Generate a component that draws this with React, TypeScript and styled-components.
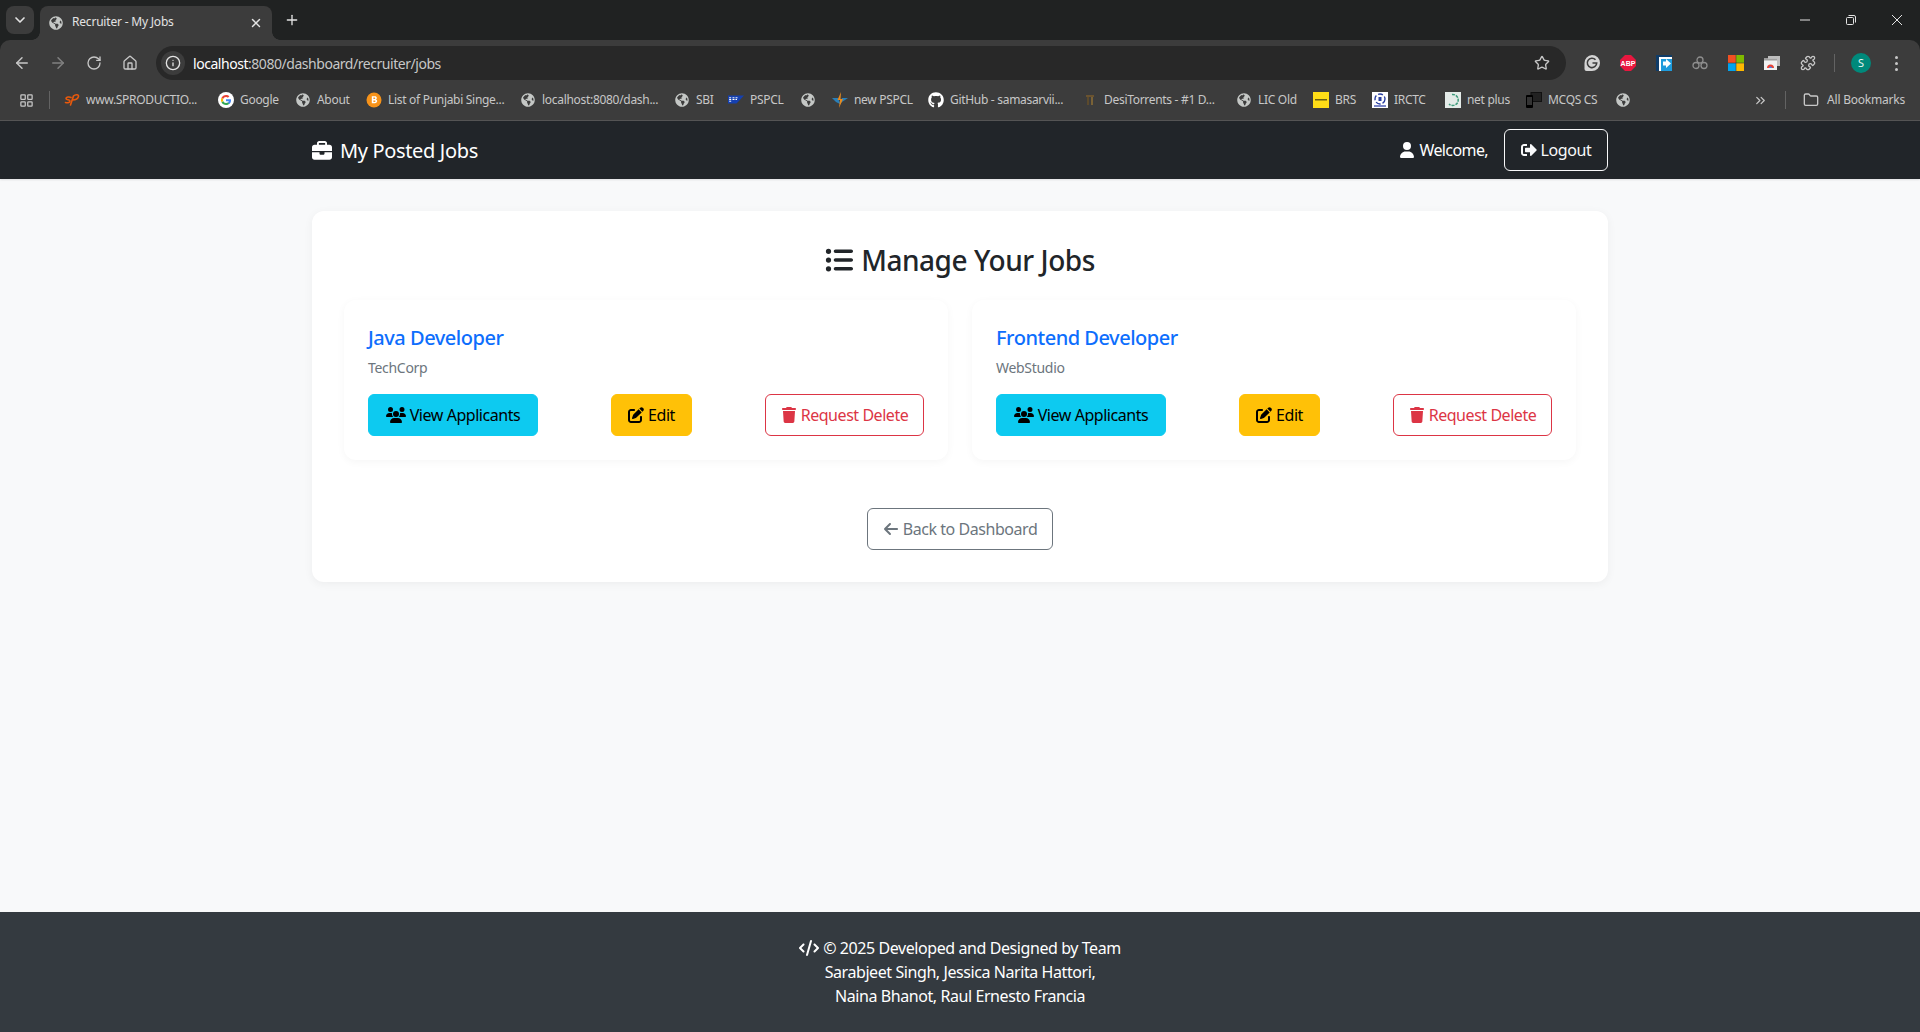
import React from "react";
import styled, { createGlobalStyle } from "styled-components";
import { FaGlobeAmericas, FaGithub, FaSignOutAlt } from "react-icons/fa";
import { FaBriefcase, FaUser, FaListUl, FaUsers, FaPenToSquare, FaTrash, FaArrowLeft, FaCode } from "react-icons/fa6";
import { ArrowLeft, ArrowRight, RotateCw, Home, Info, Star, Plus, X, ChevronDown, ChevronsRight, Folder, LayoutGrid, Puzzle } from "lucide-react";

const FONT = `"Noto Sans", "Open Sans", "Liberation Sans", sans-serif`;

const Global = createGlobalStyle`
  html, body { margin: 0; padding: 0; background: #f8f9fa; }
  body { font-family: ${FONT}; font-size: 16px; line-height: 1.5; color: #212529; }
  * { box-sizing: border-box; }
`;

const Page = styled.div`
  display: flex;
  flex-direction: column;
  min-height: 1032px;
`;

/* ---------- browser chrome ---------- */
const BrowserHeader = styled.header`
  background: #202222;
`;
const TabStrip = styled.div`
  display: flex;
  height: 40px;
  align-items: flex-start;
  position: relative;
`;
const TabSearch = styled.div`
  width: 28px;
  height: 28px;
  margin: 6px 0 0 6px;
  border-radius: 8px;
  background: #3c3c3c;
  color: #e3e3e3;
  display: flex;
  align-items: center;
  justify-content: center;
`;
const Tab = styled.div`
  width: 232px;
  height: 34px;
  margin: 6px 0 0 6px;
  padding: 0 9px;
  background: #3c3c3c;
  border-radius: 8px 8px 0 0;
  display: flex;
  align-items: center;
  color: #e3e3e3;
  font-size: 12px;
  position: relative;
  &::before, &::after {
    content: "";
    position: absolute;
    bottom: 0;
    width: 8px;
    height: 8px;
    background: radial-gradient(circle at var(--cx) 0, #202222 7.5px, #3c3c3c 8px);
  }
  &::before { left: -8px; --cx: 0; }
  &::after { right: -8px; --cx: 8px; }
`;
const TabTitle = styled.span`
  flex: 1;
  margin: 0 0 2px 9px;
  letter-spacing: -0.2px;
  white-space: nowrap;
`;
const TabPlus = styled.div`
  margin: 12px 0 0 12px;
  color: #e3e3e3;
  display: flex;
`;
const WindowControls = styled.div`
  margin-left: auto;
  display: flex;
  align-items: center;
  height: 40px;
  color: #e3e3e3;
`;
const WinBtn = styled.div`
  width: 46px;
  display: flex;
  justify-content: center;
`;

const Toolbar = styled.div`
  height: 40px;
  background: #3c3c3c;
  border-radius: 10px 10px 0 0;
  display: flex;
  align-items: flex-start;
  padding-top: 6px;
`;
const NavIcon = styled.div`
  width: 36px;
  height: 34px;
  display: flex;
  align-items: center;
  justify-content: center;
  color: ${p => (p.$off ? "#808080" : "#c7c7c7")};
`;
const NavGroup = styled.div`
  display: flex;
  padding-left: 4px;
  width: 156px;
`;
const Omnibox = styled.div`
  width: 1410px;
  height: 34px;
  border-radius: 17px;
  background: #282828;
  display: flex;
  align-items: center;
  padding: 0 16px 0 5px;
  font-size: 14px;
  color: #c7c7c7;
`;
const InfoChip = styled.div`
  width: 24px;
  height: 24px;
  border-radius: 12px;
  background: #3c3c3c;
  display: flex;
  align-items: center;
  justify-content: center;
  color: #e3e3e3;
  margin-right: 8px;
`;
const Host = styled.span`color: #fff;`;
const Url = styled.span`
  flex: 1;
  white-space: nowrap;
  letter-spacing: -0.46px;
`;
const ExtRow = styled.div`
  display: flex;
  align-items: center;
  height: 34px;
  margin-left: 18px;
`;
const Ext = styled.div`
  width: 16px;
  height: 16px;
  margin-right: ${p => p.$mr ?? 20}px;
  display: flex;
  align-items: center;
  justify-content: center;
  color: #c7c7c7;
`;
const VSep = styled.div`
  width: 1px;
  height: ${p => p.$h || 18}px;
  background: #636363;
  margin: ${p => p.$m || "0"};
  flex: none;
`;
const Avatar = styled.div`
  width: 20px;
  height: 20px;
  border-radius: 50%;
  background: #00897b;
  color: #e8f5f2;
  font-size: 11px;
  display: flex;
  align-items: center;
  justify-content: center;
  margin-left: 16px;
`;
const Dots = styled.div`
  display: flex;
  flex-direction: column;
  gap: 3px;
  margin-left: 24px;
  & > i { width: 3px; height: 3px; border-radius: 50%; background: #c7c7c7; display: block; }
`;

const BookmarkBar = styled.div`
  height: 41px;
  background: #3c3c3c;
  border-bottom: 1px solid #555;
  display: flex;
  align-items: center;
  padding: 0 15px 0 19px;
  font-size: 12px;
  letter-spacing: -0.3px;
  color: #c7c7c7;
`;
const AppsIcon = styled.div`
  display: flex;
  color: #c7c7c7;
`;
const Bookmark = styled.div`
  display: flex;
  align-items: center;
  margin-right: 16px;
  flex: none;
`;
const BmIcon = styled.div`
  width: 16px;
  height: 16px;
  display: flex;
  align-items: center;
  justify-content: center;
  color: #c7c7c7;
  flex: none;
`;
const BmText = styled.span`
  margin-left: 6px;
  white-space: nowrap;
  overflow: visible;
`;
const BmRight = styled.div`
  margin-left: auto;
  display: flex;
  align-items: center;
`;
const AllText = styled.span`margin-left: 8px; white-space: nowrap; letter-spacing: -0.22px;`;

/* ---------- app ---------- */
const Navbar = styled.nav`
  height: 58px;
  background: #212529;
  box-shadow: 0 1px 2px rgba(0,0,0,.1);
`;
const Container = styled.div`
  max-width: 1320px;
  margin: 0 auto;
  padding: 0 12px;
  height: 100%;
  display: flex;
  align-items: center;
  justify-content: space-between;
`;
const Brand = styled.div`
  display: flex;
  align-items: center;
  gap: 8px;
  color: #fff;
  font-size: 20px;
  letter-spacing: -0.35px;
  padding-top: 1px;
`;
const NavRight = styled.div`
  display: flex;
  align-items: center;
`;
const Welcome = styled.span`
  color: #fff;
  display: flex;
  align-items: center;
  gap: 4px;
  margin-right: 16px;
  letter-spacing: -0.6px;
`;
const LogoutBtn = styled.button`
  height: 42px;
  width: 104px;
  padding: 0;
  background: transparent;
  border: 1px solid #f8f9fa;
  border-radius: 6px;
  color: #f8f9fa;
  font: inherit;
  letter-spacing: -0.4px;
  display: flex;
  align-items: center;
  justify-content: center;
  gap: 4px;
`;

const Main = styled.main`
  flex: 1;
  padding: 32px 12px 0;
  max-width: 1320px;
  width: 100%;
  margin: 0 auto;
`;
const Panel = styled.section`
  background: #fff;
  border-radius: 12px;
  box-shadow: 0 2px 10px rgba(0,0,0,.05);
  padding: 32px;
`;
const Heading = styled.h3`
  margin: 0 0 23px;
  font-size: 28px;
  font-weight: 500;
  line-height: 34px;
  letter-spacing: -0.45px;
  text-align: center;
  color: #212529;
  display: flex;
  justify-content: center;
  align-items: center;
  gap: 8px;
`;
const JobGrid = styled.div`
  display: grid;
  grid-template-columns: 1fr 1fr;
  gap: 24px;
`;
const JobCard = styled.article`
  height: 160px;
  padding: 24px;
  border-radius: 12px;
  background: #fff;
  box-shadow: 0 2px 8px rgba(0,0,0,.04);
  display: flex;
  flex-direction: column;
`;
const JobTitle = styled.h5`
  margin: 2px 0 7px;
  font-size: 20px;
  font-weight: 500;
  line-height: 24px;
  letter-spacing: -0.48px;
  color: #0d6efd;
`;
const Company = styled.div`
  font-size: 14px;
  line-height: 21px;
  letter-spacing: -0.3px;
  color: #6c757d;
  margin-bottom: 16px;
`;
const Actions = styled.div`
  display: flex;
  justify-content: space-between;
`;
const palette = {
  info: "background:#0dcaf0;border-color:#0dcaf0;color:#000;",
  warning: "background:#ffc107;border-color:#ffc107;color:#000;",
  danger: "background:#fff;border-color:#dc3545;color:#dc3545;",
  secondary: "background:#fff;border-color:#6c757d;color:#6c757d;",
};
const Btn = styled.button`
  height: 42px;
  width: ${p => p.$w}px;
  padding: 0;
  border: 1px solid;
  border-radius: 6px;
  font: inherit;
  letter-spacing: -0.45px;
  white-space: nowrap;
  display: flex;
  align-items: center;
  justify-content: center;
  gap: 4px;
  ${p => palette[p.$variant]}
`;
const BackRow = styled.div`
  display: flex;
  justify-content: center;
  margin-top: 48px;
`;
const Footer = styled.footer`
  height: 120px;
  background: #343a40;
  color: #fff;
  text-align: center;
  padding-top: 24px;
  font-size: 16px;
  line-height: 24px;
  letter-spacing: -0.42px;
`;
const FooterLine = styled.div`
  display: flex;
  justify-content: center;
  align-items: center;
  gap: 4px;
`;

/* ---------- small drawings ---------- */
const Globe = ({ size = 14 }: { size?: number }) => <FaGlobeAmericas size={size} color="#c4c7c5" />;

const GoogleG = () => (
  <svg width="16" height="16" viewBox="0 0 16 16">
    <circle cx="8" cy="8" r="8" fill="#fff" />
    <path d="M13 8.2c0-.4 0-.7-.1-1H8v2h2.8c-.1.6-.5 1.2-1 1.5l1.6 1.3c1-.9 1.6-2.2 1.6-3.8z" fill="#4285f4" />
    <path d="M8 13c1.4 0 2.500-.5 3.400-1.300L9.800 10.400c-.4.300-1 .5-1.800.5-1.300 0-2.400-.9-2.800-2L3.500 10.200C4.300 11.900 6 13 8 13z" fill="#34a853" />
    <path d="M5.200 8.900C5 8.300 5 7.700 5.200 7.100L3.500 5.800c-.7 1.400-.7 3 0 4.400z" fill="#fbbc05" />
    <path d="M8 5c.8 0 1.400.3 1.900.8l1.500-1.500C10.500 3.500 9.400 3 8 3 6 3 4.300 4.100 3.500 5.800l1.700 1.300C5.600 5.900 6.700 5 8 5z" fill="#ea4335" />
  </svg>
);
const SpLogo = () => (
  <svg width="16" height="16" viewBox="0 0 16 16" fill="none" stroke="#e8590c" strokeWidth="1.6" strokeLinecap="round">
    <path d="M7 5.500C5.500 4.500 2 5 2 6.500s4 1 4 2.500-2 2-4.500 1.500" />
    <path d="M6.500 13L9.500 4c2-2 5.500-1.500 5 .5s-3 3.500-6 3.500" />
  </svg>
);
const BitcoinIcon = () => (
  <svg width="16" height="16" viewBox="0 0 16 16">
    <circle cx="8" cy="8" r="7.500" fill="#f7931a" />
    <path d="M5.800 4.200h3c1.300 0 2 .7 2 1.700 0 .7-.4 1.200-1 1.500.8.200 1.400.8 1.400 1.700 0 1.200-.9 2.100-2.300 2.100h-3.100zm1.600 1.400v1.500h1.200c.5 0 .7-.3.700-.8 0-.4-.3-.7-.7-.7zm0 2.800v1.500h1.400c.5 0 .8-.3.800-.8s-.3-.7-.8-.7z" fill="#fff" />
  </svg>
);
const SapLogo = () => (
  <svg width="16" height="16" viewBox="0 0 16 16">
    <path d="M0 3.500h16L8.500 11.500H0z" fill="#1540b0" />
    <path d="M1.200 5.800h2M1.200 7.500h2M1.200 9.200h2M4.500 5.800h2M4.500 7.500h2M7.500 5.800h2M7.500 7.500h1.500" stroke="#fff" strokeWidth="1" />
  </svg>
);
const PspclStar = () => (
  <svg width="16" height="16" viewBox="0 0 16 16">
    <path d="M0 6h6l2 5 2-5h6L10 10 8 12 4 10z" fill="#2a7fb8" />
    <path d="M9 0L5.500 8H8l-1 8 4-9H8.500z" fill="#e8891c" />
  </svg>
);
const DesiIcon = () => (
  <svg width="16" height="16" viewBox="0 0 16 16">
    <rect x="4" y="3" width="8" height="2" fill="#6a5330" />
    <rect x="5" y="5" width="2" height="8" fill="#5c4a2c" />
    <rect x="9" y="5" width="2" height="8" fill="#7a6236" />
  </svg>
);
const BrsIcon = () => (
  <svg width="16" height="16" viewBox="0 0 16 16">
    <rect width="16" height="16" fill="#ffdd17" />
    <rect x="2" y="7" width="12" height="1.500" fill="#6b6010" />
  </svg>
);
const IrctcIcon = () => (
  <svg width="16" height="16" viewBox="0 0 16 16">
    <rect width="16" height="16" fill="#fff" />
    <circle cx="8" cy="7" r="5" fill="none" stroke="#2a3fa0" strokeWidth="1.400" strokeDasharray="5 2" />
    <rect x="6.500" y="5" width="3" height="4" fill="#2a3fa0" />
    <rect x="2" y="13" width="12" height="2" fill="#7a86c8" />
  </svg>
);
const NetPlusIcon = () => (
  <svg width="16" height="16" viewBox="0 0 16 16">
    <rect width="16" height="16" fill="#e4ebe8" />
    <path d="M7 2.500a5.500 5.500 0 1 1-3 9.500" fill="none" stroke="#3c9a7a" strokeWidth="1.500" strokeDasharray="3 1" />
  </svg>
);
const McqsIcon = () => (
  <svg width="16" height="16" viewBox="0 0 16 16">
    <rect x="5" y="0.500" width="10.500" height="9" fill="#222" stroke="#111" />
    <rect x="0" y="3" width="7" height="13" rx="1" fill="#000" />
    <rect x="1" y="5" width="5" height="8" fill="#333" />
  </svg>
);
const GrammarlyExt = () => (
  <svg width="16" height="16" viewBox="0 0 16 16">
    <path d="M8 0a8 8 0 0 1 0 16H2.500A2 2 0 0 1 .500 14V8A8 8 0 0 1 8 0z" fill="#d4d4d4" />
    <path d="M11.500 4.800A4.700 4.700 0 1 0 12.700 8H8.500" fill="none" stroke="#3c3c3c" strokeWidth="1.600" />
  </svg>
);
const AbpExt = () => (
  <svg width="16" height="16" viewBox="0 0 16 16">
    <path d="M5 0h6l5 5v6l-5 5H5l-5-5V5z" fill="#e8173f" />
    <text x="8" y="10.500" fontSize="7" fontWeight="700" fontFamily="Liberation Sans, sans-serif" textAnchor="middle" fill="#fff">ABP</text>
  </svg>
);
const BlueExt = () => (
  <svg width="16" height="16" viewBox="0 0 16 16">
    <rect width="16" height="16" fill="#0f3c68" />
    <rect x="3" y="2" width="13" height="14" fill="#1e9bdc" />
    <path d="M3 2h13v2H5v12H3z" fill="#fff" />
    <path d="M7 6.500h3V4l5 4.500L10 13v-2.500H7z" fill="#fff" />
  </svg>
);
const TriExt = () => (
  <svg width="16" height="16" viewBox="0 0 16 16" fill="none" stroke="#8e8e8e" strokeWidth="1.300">
    <circle cx="8" cy="5" r="3" />
    <circle cx="4" cy="10.500" r="3" />
    <circle cx="12" cy="10.500" r="3" />
  </svg>
);
const MsExt = () => (
  <svg width="16" height="16" viewBox="0 0 16 16">
    <rect width="7.700" height="7.700" fill="#f25022" />
    <rect x="8.300" width="7.700" height="7.700" fill="#7fba00" />
    <rect y="8.300" width="7.700" height="7.700" fill="#00a4ef" />
    <rect x="8.300" y="8.300" width="7.700" height="7.700" fill="#ffb900" />
  </svg>
);
const TabsExt = () => (
  <svg width="16" height="16" viewBox="0 0 16 16">
    <rect x="4" y="1" width="12" height="10" fill="#bdbdbd" />
    <rect x="0" y="3.500" width="13" height="11.500" fill="#f1f1f1" />
    <rect x="0" y="3.500" width="13" height="2" fill="#9e9e9e" />
    <path d="M3 13a3.500 3.500 0 0 1 7 0z" fill="#ea4335" />
    <path d="M5 13a1.500 1.500 0 0 1 3 0z" fill="#4285f4" />
    <path d="M8.500 13a2 2 0 0 1 1.500 0z" fill="#34a853" />
  </svg>
);
const MinIcon = () => (
  <svg width="10" height="10" viewBox="0 0 10 10"><path d="M0 5h10" stroke="#e3e3e3" strokeWidth="1" /></svg>
);
const RestoreIcon = () => (
  <svg width="10" height="10" viewBox="0 0 10 10" fill="none" stroke="#e3e3e3" strokeWidth="1">
    <rect x="0.500" y="2.500" width="7" height="7" rx="1" />
    <path d="M2.500 .5h5.500a1.500 1.500 0 0 1 1.500 1.500v5.500" />
  </svg>
);
const CloseIcon = () => (
  <svg width="10" height="10" viewBox="0 0 10 10"><path d="M0 0l10 10M10 0L0 10" stroke="#e3e3e3" strokeWidth="1" /></svg>
);

const bookmarks: { icon: React.ReactNode; text?: string; w?: number }[] = [
  { icon: <SpLogo />, text: "www.SPRODUCTIO...", w: 116 },
  { icon: <GoogleG />, text: "Google", w: 39 },
  { icon: <Globe />, text: "About", w: 33 },
  { icon: <BitcoinIcon />, text: "List of Punjabi Singe...", w: 116 },
  { icon: <Globe />, text: "localhost:8080/dash...", w: 116 },
  { icon: <Globe />, text: "SBI", w: 16 },
  { icon: <SapLogo />, text: "PSPCL", w: 34 },
  { icon: <Globe /> },
  { icon: <PspclStar />, text: "new PSPCL", w: 58 },
  { icon: <FaGithub size={16} color="#fff" />, text: "GitHub - samasarvii...", w: 116 },
  { icon: <DesiIcon />, text: "DesiTorrents - #1 D...", w: 116 },
  { icon: <Globe />, text: "LIC Old", w: 39 },
  { icon: <BrsIcon />, text: "BRS", w: 21 },
  { icon: <IrctcIcon />, text: "IRCTC", w: 35 },
  { icon: <NetPlusIcon />, text: "net plus", w: 43 },
  { icon: <McqsIcon />, text: "MCQS CS", w: 51 },
  { icon: <Globe /> },
];

const jobs = [
  { title: "Java Developer", company: "TechCorp" },
  { title: "Frontend Developer", company: "WebStudio" },
];

export default function App() {
  return (
    <Page>
      <Global />
      <BrowserHeader>
        <TabStrip>
          <TabSearch><ChevronDown size={16} strokeWidth={2.5} /></TabSearch>
          <Tab>
            <Globe size={14} />
            <TabTitle>Recruiter - My Jobs</TabTitle>
            <X size={14} strokeWidth={2.5} />
          </Tab>
          <TabPlus><Plus size={16} strokeWidth={2} /></TabPlus>
          <WindowControls>
            <WinBtn><MinIcon /></WinBtn>
            <WinBtn><RestoreIcon /></WinBtn>
            <WinBtn><CloseIcon /></WinBtn>
          </WindowControls>
        </TabStrip>
        <Toolbar>
          <NavGroup>
            <NavIcon><ArrowLeft size={18} /></NavIcon>
            <NavIcon $off><ArrowRight size={18} /></NavIcon>
            <NavIcon><RotateCw size={16} /></NavIcon>
            <NavIcon><Home size={16} /></NavIcon>
          </NavGroup>
          <Omnibox>
            <InfoChip><Info size={16} /></InfoChip>
            <Url><Host>localhost</Host>:8080/dashboard/recruiter/jobs</Url>
            <Star size={16} />
          </Omnibox>
          <ExtRow>
            <Ext><GrammarlyExt /></Ext>
            <Ext><AbpExt /></Ext>
            <Ext><BlueExt /></Ext>
            <Ext><TriExt /></Ext>
            <Ext><MsExt /></Ext>
            <Ext><TabsExt /></Ext>
            <Ext $mr={18}><Puzzle size={16} /></Ext>
            <VSep />
            <Avatar>S</Avatar>
            <Dots><i /><i /><i /></Dots>
          </ExtRow>
        </Toolbar>
      </BrowserHeader>
      <BookmarkBar>
        <AppsIcon><LayoutGrid size={15} /></AppsIcon>
        <VSep $m="0 14px 0 15px" />
        {bookmarks.map((b, i) => (
          <Bookmark key={i}>
            <BmIcon>{b.icon}</BmIcon>
            {b.text && <BmText style={{ width: b.w }}>{b.text}</BmText>}
          </Bookmark>
        ))}
        <BmRight>
          <ChevronsRight size={15} />
          <VSep $m="0 17px 0 17px" />
          <Folder size={16} />
          <AllText>All Bookmarks</AllText>
        </BmRight>
      </BookmarkBar>

      <Navbar>
        <Container>
          <Brand><FaBriefcase size={20} />My Posted Jobs</Brand>
          <NavRight>
            <Welcome><FaUser size={16} />Welcome,</Welcome>
            <LogoutBtn><FaSignOutAlt size={16} />Logout</LogoutBtn>
          </NavRight>
        </Container>
      </Navbar>

      <Main>
        <Panel>
          <Heading><FaListUl size={28} />Manage Your Jobs</Heading>
          <JobGrid>
            {jobs.map(j => (
              <JobCard key={j.title}>
                <JobTitle>{j.title}</JobTitle>
                <Company>{j.company}</Company>
                <Actions>
                  <Btn $variant="info" $w={170}><FaUsers size={20} />View Applicants</Btn>
                  <Btn $variant="warning" $w={81}><FaPenToSquare size={16} />Edit</Btn>
                  <Btn $variant="danger" $w={159}><FaTrash size={16} />Request Delete</Btn>
                </Actions>
              </JobCard>
            ))}
          </JobGrid>
          <BackRow>
            <Btn $variant="secondary" $w={186}><FaArrowLeft size={16} />Back to Dashboard</Btn>
          </BackRow>
        </Panel>
      </Main>

      <Footer>
        <FooterLine><FaCode size={20} />© 2025 Developed and Designed by Team</FooterLine>
        <FooterLine>Sarabjeet Singh, Jessica Narita Hattori,</FooterLine>
        <FooterLine>Naina Bhanot, Raul Ernesto Francia</FooterLine>
      </Footer>
    </Page>
  );
}
